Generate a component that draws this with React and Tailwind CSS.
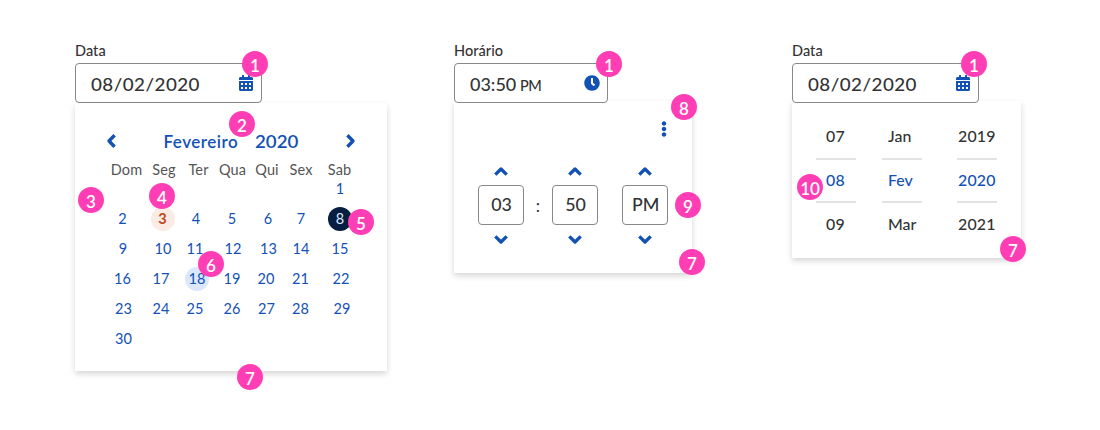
import React from "react";
import { FaCalendarAlt, FaClock, FaEllipsisV } from "react-icons/fa";

const turns = { up: "", right: "rotate-90", down: "rotate-180", left: "-rotate-90" };

function Chevron({ dir }) {
  return (
    <svg viewBox="0 0 14 14" className={`h-[14px] w-[14px] ${turns[dir]}`} fill="none" stroke="currentColor" strokeWidth="3.4" strokeLinejoin="round">
      <path d="M1.3 10.6 L7 5 L12.7 10.6" />
    </svg>
  );
}

function Badge({ n, at }) {
  return (
    <span className={`absolute z-10 flex h-[26px] w-[26px] items-center justify-center rounded-full bg-[#ff3eb5] pt-[2px] text-[17px] leading-none font-semibold text-white ${at}`}>
      {n}
    </span>
  );
}

function Field({ label, value, icon, width }) {
  return (
    <div className={width}>
      <div className="h-[23px] pt-[4px] text-[14.5px] leading-[14px] font-medium tracking-[0.05px]">{label}</div>
      <div className="flex h-[40px] items-center justify-between rounded-[4px] border border-[#888] bg-white pr-[7px] pl-[15px]">
        <span className="pt-[4px] text-[16.5px] leading-none font-medium whitespace-nowrap">{value}</span>
        <span className="text-[16px] text-[#1351b4]">{icon}</span>
      </div>
    </div>
  );
}

const panel = "bg-white shadow-[0_3px_6px_rgba(0,0,0,0.16)]";

const names = ["Dom", "Seg", "Ter", "Qua", "Qui", "Sex", "Sab"];

const weeks = [
  ["", "", "", "", "", "", "1"],
  ["2", "3", "4", "5", "6", "7", "8"],
  ["9", "10", "11", "12", "13", "14", "15"],
  ["16", "17", "18", "19", "20", "21", "22"],
  ["23", "24", "25", "26", "27", "28", "29"],
  ["30", "", "", "", "", "", ""],
];

const nudges = {
  2: "pr-[2px]", 3: "pl-[3px]", 4: "pr-[1px]", 6: "pl-[1px]", 7: "pr-[3px]", 9: "pr-[1px]", 10: "pl-[4px]",
  11: "pr-[3px]", 12: "pl-[2px]", 13: "pl-[2px]", 14: "pr-[3px]", 16: "pr-[2px]",
  18: "pl-[1px]", 20: "pr-[3px]", 21: "pr-[4px]", 22: "pl-[2px]", 25: "pr-[3px]", 27: "pr-[2px]",
  28: "pr-[4px]", 29: "pl-[4px]",
};

const marks = {
  3: "bg-[#fbebe5] font-bold text-[#c0451a]",
  8: "bg-[#071d41] text-[#dbe8fb]",
  18: "bg-[#dbe8fb]",
};

function Calendar() {
  return (
    <div className={`h-[268px] w-[312px] text-[#1351b4] ${panel}`}>
      <div className="flex h-[57px] items-center justify-between pt-[19px] pr-[29px] pl-[29px]">
        <Chevron dir="left" />
        <div className="flex gap-[16px] pl-[1px] text-[17px] leading-none font-semibold">
          <span className="w-[75px] tracking-[0.5px]">Fevereiro</span>
          <span className="w-[45px]"><span className="inline-block origin-left scale-x-[1.1]">2020</span></span>
        </div>
        <Chevron dir="right" />
      </div>
      <div className="grid h-[17px] grid-cols-[39px_36px_33px_35px_34px_34px_43px] pt-[1px] pl-[32px] text-center text-[14.5px] leading-[18px] tracking-[0.15px] text-[#555]">
        {names.map((n) => <span key={n}>{n}</span>)}
      </div>
      {weeks.map((week, r) => (
        <div key={r} className="grid h-[30px] grid-cols-[39px_36px_35px_36px_35px_35px_40px] pl-[29px] text-[14.5px] leading-none">
          {week.map((d, c) => (
            <span key={c} className={`flex items-start justify-center ${nudges[d] || ""}`}>
              <span className={`flex h-[24px] w-[24px] items-center justify-center rounded-full pt-[1px] ${marks[d] || ""}`}>{d}</span>
            </span>
          ))}
        </div>
      ))}
    </div>
  );
}

function Stepper({ value }) {
  return (
    <div className="flex w-[46px] flex-col items-center text-[#1351b4]">
      <Chevron dir="up" />
      <span className="mt-[7px] mb-[8px] flex h-[40px] w-[46px] items-center justify-center rounded-[4px] border border-[#888] pl-[1px] text-[16.5px] leading-none font-medium text-[#333]">
        <span className="inline-block scale-x-[1.08]">{value}</span>
      </span>
      <Chevron dir="down" />
    </div>
  );
}

function TimePanel() {
  return (
    <div className={`h-[172px] w-[238px] ${panel}`}>
      <div className="flex h-[63px] justify-end pt-[20px] pr-[20px] text-[#1351b4]">
        <FaEllipsisV className="h-[16px] w-[16px]" />
      </div>
      <div className="flex pl-[24px]">
        <Stepper value="03" />
        <span className="flex w-[28px] items-center justify-center text-[17px]">:</span>
        <Stepper value="50" />
        <span className="w-[24px]" />
        <Stepper value="PM" />
      </div>
    </div>
  );
}

function Wheel({ items, pad }) {
  return (
    <div className="flex w-[40px] flex-col text-[15px] leading-none font-medium">
      {items.map((t, i) => (
        <span key={t} className={`flex items-center whitespace-nowrap ${pad} ${i === 1 ? "h-[45px] border-y-2 border-[#e3e3e3] text-[#1351b4]" : i === 0 ? "h-[42px] pb-[2px]" : "h-[42px]"}`}>
          <span className="inline-block origin-left scale-x-[1.06]">{t}</span>
        </span>
      ))}
    </div>
  );
}

function DatePanel() {
  return (
    <div className={`flex h-[157px] w-[229px] pt-[15px] pl-[24px] ${panel}`}>
      <Wheel items={["07", "08", "09"]} pad="pl-[10px] tracking-[0.3px]" />
      <span className="w-[26px]" />
      <Wheel items={["Jan", "Fev", "Mar"]} pad="pl-[6px]" />
      <span className="w-[35px]" />
      <Wheel items={["2019", "2020", "2021"]} pad="pl-[1px] tracking-[0.2px]" />
    </div>
  );
}

export default function App() {
  const date = <span className="inline-block origin-left scale-x-[1.14] tracking-[0.4px]">08/02/2020</span>;
  const time = (
    <span className="flex items-baseline">
      <span className="w-[50px]"><span className="inline-block origin-left scale-x-[1.09]">03:50</span></span>
      <span className="text-[14.5px] tracking-[-0.5px]">PM</span>
    </span>
  );
  return (
    <div className="flex h-[430px] w-[1100px] items-start bg-white pt-[40px] pl-[75px] font-['Lato',sans-serif] text-[#333]">
      <section className="relative w-[379px]">
        <Field label="Data" value={date} icon={<FaCalendarAlt />} width="w-[187px]" />
        <Calendar />
        <Badge n="1" at="left-[167px] top-[11px]" />
        <Badge n="2" at="left-[154px] top-[71px]" />
        <Badge n="3" at="left-[3px] top-[147px]" />
        <Badge n="4" at="left-[74px] top-[143px]" />
        <Badge n="5" at="left-[273px] top-[169px]" />
        <Badge n="6" at="left-[123px] top-[211px]" />
        <Badge n="7" at="left-[162px] top-[324px]" />
      </section>
      <section className="relative w-[338px]">
        <div className="relative z-[1] -mb-[2px]">
          <Field label="Horário" value={time} icon={<FaClock />} width="w-[154px]" />
        </div>
        <TimePanel />
        <Badge n="1" at="left-[142px] top-[11px]" />
        <Badge n="8" at="left-[217px] top-[54px]" />
        <Badge n="9" at="left-[221px] top-[152px]" />
        <Badge n="7" at="left-[225px] top-[209px]" />
      </section>
      <section className="relative w-[229px]">
        <div className="relative z-[1] -mb-[2px]">
          <Field label="Data" value={date} icon={<FaCalendarAlt />} width="w-[187px]" />
        </div>
        <DatePanel />
        <Badge n="1" at="left-[169px] top-[11px]" />
        <Badge n="10" at="left-[5px] top-[134px]" />
        <Badge n="7" at="left-[208px] top-[196px]" />
      </section>
    </div>
  );
}
